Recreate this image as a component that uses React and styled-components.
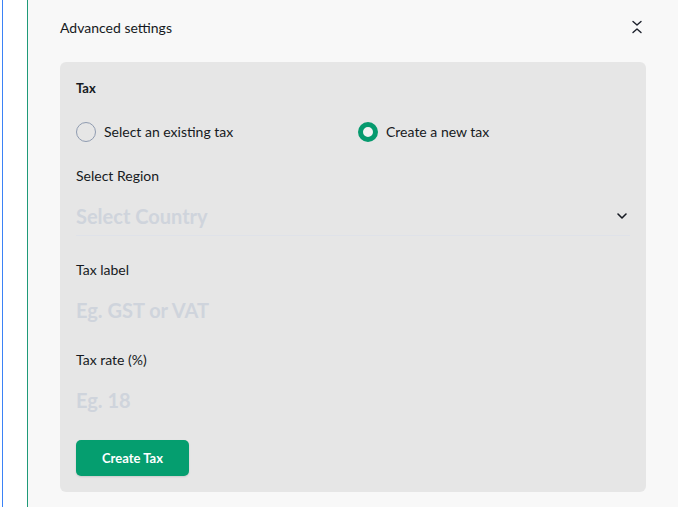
import React, { useState } from 'react'
import styled, { createGlobalStyle } from 'styled-components'

const GlobalStyle = createGlobalStyle`
  html, body {
    margin: 0;
    padding: 0;
    height: 100%;
    background: #ffffff;
  }
  body {
    font-family: "Segoe UI", Lato, "Noto Sans", sans-serif;
    color: #161a22;
  }
  #root {
    height: 100%;
  }
`

const Frame = styled.div`
  display: flex;
  height: 100%;
  padding-left: 2px;
  box-sizing: border-box;
`

const Gutter = styled.div`
  width: 24px;
  border-left: 1px solid #3b82f6;
  border-right: 1px solid #1f9a78;
  background: #ffffff;
  flex-shrink: 0;
`

const Content = styled.main`
  flex: 1;
  background: #f8f8f8;
  padding: 17px 32px 15px 32px;
  display: flex;
  flex-direction: column;
`

const Header = styled.div`
  display: flex;
  align-items: center;
  justify-content: space-between;
  height: 20px;
  margin-bottom: 25px;
  font-size: 14px;
  padding-right: 3px;
`

const IconButton = styled.button`
  border: 0;
  background: none;
  padding: 0;
  display: flex;
  color: #1b1f2a;
  cursor: pointer;
`

const Panel = styled.section`
  flex: 1;
  background: #e6e6e6;
  border-radius: 6px;
  padding: 17px 16px 16px;
  display: flex;
  flex-direction: column;
`

const Heading = styled.h3`
  margin: 0 0 25px;
  font-size: 13px;
  font-weight: 700;
  line-height: 18px;
`

const Options = styled.div`
  display: grid;
  grid-template-columns: 1fr 1fr;
  column-gap: 10px;
  margin-bottom: 24px;
`

const Option = styled.label`
  display: flex;
  align-items: center;
  gap: 8px;
  font-size: 14px;
  line-height: 20px;
  cursor: pointer;
`

const Radio = styled.span`
  width: 20px;
  height: 20px;
  box-sizing: border-box;
  border-radius: 50%;
  border: ${(p) => (p.$checked ? '5px solid #069a6e' : '1.5px solid #8f9bb0')};
  background: ${(p) => (p.$checked ? '#f2f2f2' : 'transparent')};
  flex-shrink: 0;
`

const Field = styled.div`
  display: flex;
  flex-direction: column;
  gap: 10px;
  margin-bottom: ${(p) => p.$gap || 20}px;
`

const Label = styled.span`
  font-size: 14px;
  line-height: 20px;
`

const Control = styled.div`
  height: 40px;
  display: flex;
  align-items: center;
  justify-content: space-between;
  box-sizing: border-box;
  border-bottom: 1px solid ${(p) => (p.$line ? '#dfe2e9' : 'transparent')};
  padding-right: 2px;
`

const Placeholder = styled.span`
  font-size: 20px;
  font-weight: 700;
  color: #cfd4dc;
  line-height: 28px;
`

const Submit = styled.button`
  align-self: flex-start;
  width: 113px;
  height: 36px;
  border: 0;
  border-radius: 5px;
  background: #059e6f;
  color: #ffffff;
  font-family: inherit;
  font-size: 13px;
  font-weight: 700;
  box-shadow: 0 1px 2px rgba(0, 0, 0, 0.12);
  cursor: pointer;
`

const ChevronsDownUp = () => (
  <svg width="12" height="14" viewBox="0 0 12 14" fill="none" stroke="currentColor" strokeWidth="1.4" strokeLinecap="round" strokeLinejoin="round">
    <path d="M2 1.5l4 3.5 4-3.5" />
    <path d="M2 12.5l4-3.5 4 3.5" />
  </svg>
)

const ChevronDown = () => (
  <svg width="12" height="8" viewBox="0 0 12 8" fill="none" stroke="currentColor" strokeWidth="1.6" strokeLinecap="round" strokeLinejoin="round">
    <path d="M2 2l4 4 4-4" />
  </svg>
)

export default function App() {
  const [mode, setMode] = useState('new')

  return (
    <>
      <GlobalStyle />
      <Frame>
        <Gutter />
        <Content>
          <Header>
            <span>Advanced settings</span>
            <IconButton aria-label="Collapse">
              <ChevronsDownUp />
            </IconButton>
          </Header>
          <Panel>
            <Heading>Tax</Heading>
            <Options>
              <Option onClick={() => setMode('existing')}>
                <Radio $checked={mode === 'existing'} />
                Select an existing tax
              </Option>
              <Option onClick={() => setMode('new')}>
                <Radio $checked={mode === 'new'} />
                Create a new tax
              </Option>
            </Options>
            <Field $gap={24}>
              <Label>Select Region</Label>
              <Control $line>
                <Placeholder>Select Country</Placeholder>
                <ChevronDown />
              </Control>
            </Field>
            <Field>
              <Label>Tax label</Label>
              <Control>
                <Placeholder>Eg. GST or VAT</Placeholder>
              </Control>
            </Field>
            <Field>
              <Label>Tax rate (%)</Label>
              <Control>
                <Placeholder>Eg. 18</Placeholder>
              </Control>
            </Field>
            <Submit>Create Tax</Submit>
          </Panel>
        </Content>
      </Frame>
    </>
  )
}
